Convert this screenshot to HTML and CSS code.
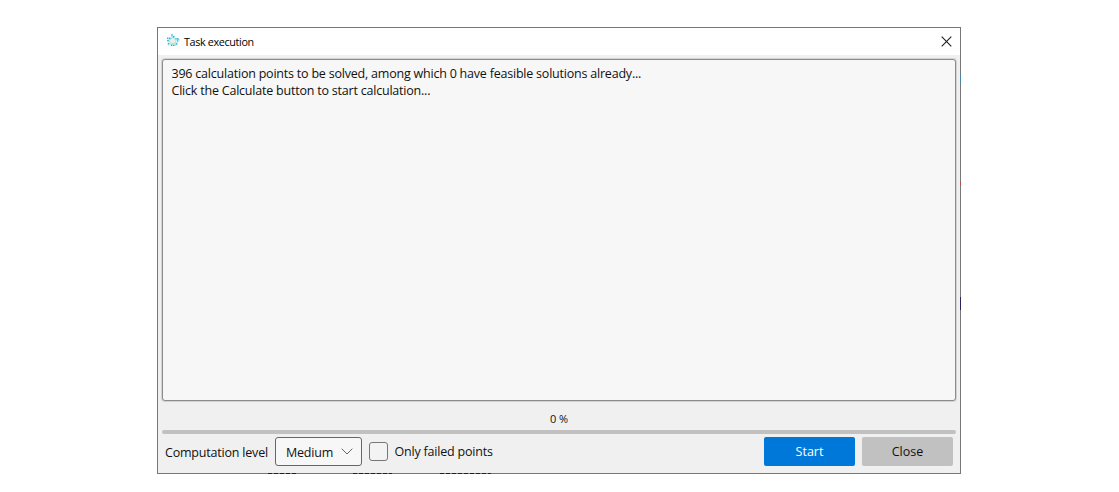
FILE: index.html
```html
<!DOCTYPE html>
<html lang="en">
<head>
<meta charset="utf-8">
<title>Task execution</title>
<link rel="stylesheet" href="styles.css">
</head>
<body>
<main class="dialog">
  <header class="titlebar">
    <svg class="logo" width="14" height="13" viewBox="0 0 14 13" fill="none">
      <path d="M7 3 8.500 5H11L9.500 7.500 10 10 7 9.500 4 10.500 4 8 2.500 6 5 5Z" fill="#e6f3e4" stroke="#a6dfeb" stroke-width="1"/>
      <path d="M6 .3v3M7.800 2v2M4.500 4.300H1M1.500 6l1.500 2M2.500 9v2.200M5 11.300h4.500M10.700 10.800V8.500M11.200 7.500l2-2M12.500 4.700H9.500" stroke="#24b5dd" stroke-width="1.5" stroke-dasharray="1.500 .6"/>
    </svg>
    <h1 class="title">Task execution</h1>
    <button class="dismiss" aria-label="Close window">
      <svg width="11" height="11" viewBox="0 0 11 11" fill="none" stroke="#222" stroke-width="1.15"><path d="M.7.7l9.600 9.600M10.300.7.7 10.300"/></svg>
    </button>
  </header>
  <section class="log">
    <p class="line">396 calculation points to be solved, among which 0 have feasible solutions already...</p>
    <p class="line">Click the Calculate button to start calculation...</p>
  </section>
  <div class="percent">0 %</div>
  <div class="progress"></div>
  <footer class="controls">
    <span class="label">Computation level</span>
    <button class="select"><span class="select-text">Medium</span>
      <svg width="12" height="7" viewBox="0 0 12 7" fill="none" stroke="#666" stroke-width="1"><path d="M.7.7 6 6 11.300.7"/></svg>
    </button>
    <span class="checkbox"></span>
    <span class="check-label">Only failed points</span>
    <button class="button start">Start</button>
    <button class="button close">Close</button>
  </footer>
  <i class="edge edge-blue"></i>
  <i class="edge edge-red"></i>
  <i class="edge edge-navy"></i>
  <i class="under under-left"></i>
  <i class="under under-middle"></i>
  <i class="under under-right"></i>
</main>
</body>
</html>
```
FILE: styles.css
```css
* { box-sizing: border-box; }
body {
  margin: 0;
  padding: 27px 0 0 157px;
  background: #fff;
  color: #111;
  font: 12.500px/17px "Open Sans", "Noto Sans", sans-serif;
}
button { margin: 0; padding: 0; border: 0; background: none; color: inherit; font: inherit; letter-spacing: inherit; }
.dialog {
  position: relative;
  display: flex;
  flex-direction: column;
  width: 804px;
  height: 447px;
  border: 1px solid #777;
  background: #f0f0f0;
}
.titlebar {
  display: flex;
  align-items: center;
  height: 27px;
  padding: 0 8px;
  background: #fff;
}
.logo { margin-top: -3px; }
.title { flex: 1; margin: -1px 0 0 4px; color: #000; font-size: 10.800px; font-weight: 400; letter-spacing: -.36px; }
.dismiss { display: flex; margin-top: -1px; }
.log {
  height: 342px;
  margin: 4px 4px 0;
  padding: 5px 9px 5px 8.500px;
  border: 1px solid #8c8c8c;
  border-radius: 3px;
  background: #f7f7f7;
  box-shadow: 0 0 0 1px #d2d2d2;
  letter-spacing: -.212px;
}
.line { margin: 0; white-space: nowrap; }
.percent { height: 17px; margin-top: 9px; text-align: center; font-size: 11px; }
.progress { height: 4px; margin: 3px 4px 0; border-radius: 2px; background: #c1c1c1; }
.controls { display: flex; align-items: center; height: 29px; margin: 3px 7px 0; white-space: nowrap; letter-spacing: -.2px; }
.label { width: 110px; padding-top: 2px; }
.select {
  display: flex;
  align-items: center;
  justify-content: space-between;
  width: 87px;
  height: 29px;
  padding: 0 8px 0 10px;
  border: 1px solid #666;
  border-radius: 3px;
  background: #f7f7f7;
}
.select-text { padding-top: 2px; }
.checkbox { width: 19px; height: 19px; margin: 0 6.500px 0 7px; border: 1px solid #777; border-radius: 3px; background: #f3f3f3; }
.check-label { flex: 1; }
.button { width: 91px; height: 29px; border-radius: 2px; letter-spacing: 0; }
.start { background: #0078d9; color: #fff; }
.close { margin-left: 7px; background: #c1c1c1; }
/* Slivers of the window behind that show through the dialog's edge. */
.edge { position: absolute; right: -1px; width: 1px; }
.edge-blue { top: 46px; height: 10px; background: #4b83a5; }
.edge-red { top: 154px; height: 3px; background: #b44; }
.edge-navy { top: 269px; height: 13px; background: #252560; }
.under {
  position: absolute;
  bottom: -1px;
  height: 1px;
  background: repeating-linear-gradient(90deg, #222 0 4px, #777 4px 6px);
}
.under-left { left: 110px; width: 29px; }
.under-middle { left: 195px; width: 39px; }
.under-right { left: 282px; width: 51px; }
```
